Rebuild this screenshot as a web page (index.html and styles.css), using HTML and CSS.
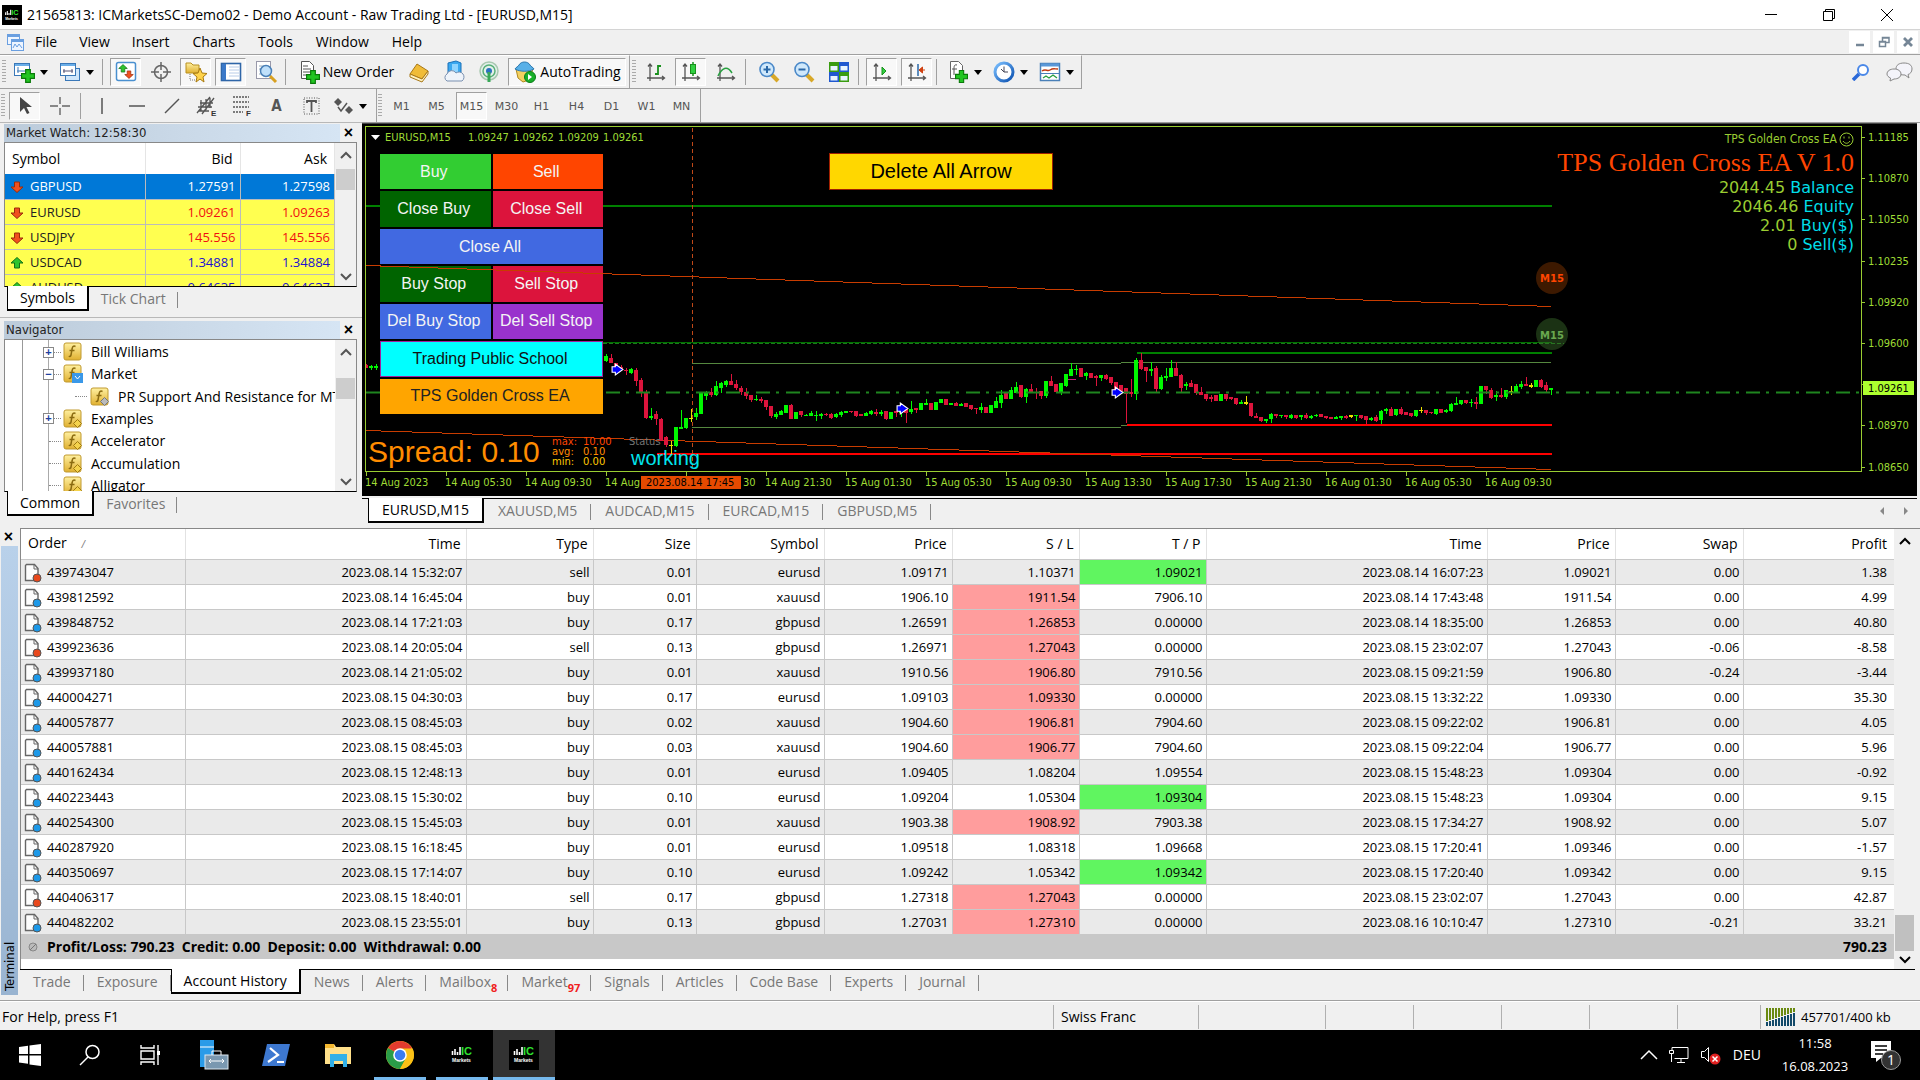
FILE: index.html
```html
<!DOCTYPE html>
<html lang="en">
<head>
<meta charset="utf-8">
<title>21565813: ICMarketsSC-Demo02 - Demo Account - Raw Trading Ltd - [EURUSD,M15]</title>
<link rel="stylesheet" href="styles.css">
</head>
<body>
<svg class="defs" aria-hidden="true">
  <defs>
    <linearGradient id="gold" x1="0" y1="0" x2="0" y2="1"><stop offset="0" stop-color="#fff0a0"/><stop offset="1" stop-color="#e0b030"/></linearGradient>
    <linearGradient id="blue" x1="0" y1="0" x2="1" y2="1"><stop offset="0" stop-color="#7cc0ff"/><stop offset="1" stop-color="#0a50b0"/></linearGradient>
    <symbol id="plus" viewBox="0 0 12 12"><path d="M4 0.500h4v3.500h3.500v4H8v3.500H4V8H0.500V4H4z" fill="#22c522" stroke="#0a7a0a"/></symbol>
    <symbol id="fx" viewBox="0 0 20 20"><rect x="1" y="1" width="17" height="17" rx="2" fill="url(#gold)" stroke="#c09a30"/><path d="M12.500 4.500c-2-1-3 0-3.300 2L8 13c-.3 1.500-1.200 1.800-2.200 1.200M6.500 8.500h5" fill="none" stroke="#8a6a10" stroke-width="1.500"/></symbol>
    <symbol id="fxd" viewBox="0 0 20 20"><use href="#fx"/><path d="M14.500 10.500l4 4-4 4-4-4z" fill="#f4d24c" stroke="#a07a10"/></symbol>
    <symbol id="axes" viewBox="0 0 20 20"><path d="M4 2v17M1 16h17M2 4.500l2-2.500 2 2.500M16 14l2.500 2-2.500 2" fill="none" stroke="#555" stroke-width="1.300"/></symbol>
    <symbol id="up" viewBox="0 0 14 12"><path d="M7 .5l6 5.500h-3.500v5h-5V6H1z" fill="#2ec42e" stroke="#157015"/></symbol>
    <symbol id="down" viewBox="0 0 14 12"><path d="M7 11.500L1 6h3.500V1h5v5H13z" fill="#f0501e" stroke="#9a2c0a"/></symbol>
    <symbol id="doc" viewBox="0 0 18 20"><path d="M2.500 1.500h8l3.500 4v12H1.500v-15z" fill="#fdfdfd" stroke="#666" stroke-width="1.400"/><path d="M10 1.500V6h4" fill="none" stroke="#666"/></symbol>
    <symbol id="ic" viewBox="0 0 30 30"><rect width="30" height="30"/><path d="M5.500 15v-4M8 15V9M10.500 15v-3M13 15V7" stroke="#fff" stroke-width="1.600"/><text x="14" y="15" font-family="Liberation Sans" font-size="11" font-weight="bold" fill="#2fe02f">IC</text><text x="5" y="22" font-family="Liberation Sans" font-size="5" font-weight="bold" fill="#fff">Markets</text></symbol>
    <symbol id="arrow" viewBox="0 0 12 12"><path d="M1 3.500h3V1l7 5-7 5V8.500H1z" fill="#0000ff" stroke="#fff" stroke-width="1"/></symbol>
  </defs>
</svg>

<header class="titlebar">
  <svg class="app-icon" width="20" height="20"><use href="#ic"/></svg>
  <h1>21565813: ICMarketsSC-Demo02 - Demo Account - Raw Trading Ltd - [EURUSD,M15]</h1>
  <div class="window-controls">
    <button aria-label="Minimize"><svg width="14" height="14"><path d="M1 6.500h12" stroke="#000"/></svg></button>
    <button aria-label="Restore"><svg width="14" height="14" fill="none" stroke="#000"><path d="M1.500 3.500h9v9h-9zM3.500 3.500v-2h9v9h-2"/></svg></button>
    <button aria-label="Close"><svg width="14" height="14" fill="none" stroke="#000"><path d="M1 1l12 12M13 1L1 13"/></svg></button>
  </div>
</header>

<nav class="menubar">
  <svg width="20" height="20" fill="#eef5ff" stroke="#6a9fe0"><rect x="2.500" y="2.500" width="12" height="10"/><rect x="6.500" y="7.500" width="12" height="11"/><path d="M3 4h11M7 9h11" stroke-width="2"/><path d="M8 16l2-4 2 3 2-3 3 4" fill="none"/></svg>
  <button>File</button><button>View</button><button>Insert</button><button>Charts</button><button>Tools</button><button>Window</button><button>Help</button>
  <div class="mdi-controls">
    <button aria-label="Minimize chart"><svg width="12" height="12"><path d="M2 9h8" stroke="#758696" stroke-width="2.500"/></svg></button>
    <button aria-label="Restore chart"><svg width="12" height="12" fill="none" stroke="#758696" stroke-width="1.500"><path d="M1.500 5.500h6v5h-6zM1 6h7M4.500 5V1.500h6.500v5H8M4 2h7"/></svg></button>
    <button aria-label="Close chart"><svg width="12" height="12"><path d="M2 2l8 8M10 2l-8 8" stroke="#758696" stroke-width="2.800"/></svg></button>
  </div>
</nav>

<div class="toolbar-row">
  <div class="toolbar boxed">
    <span class="grip"></span>
    <button class="split" aria-label="New chart"><svg width="22" height="22"><rect x="1.500" y="2.500" width="15" height="12" fill="#fff" stroke="#3a78b8"/><path d="M2 4h14" stroke="#6aaee8" stroke-width="2"/><path d="M5 6v6M4 10h8" stroke="#3a78b8"/><use href="#plus" x="8" y="8" width="14" height="14"/></svg></button>
    <button class="split" aria-label="Profiles"><svg width="22" height="22"><rect x="6.500" y="7.500" width="14" height="12" fill="#cfe6fb" stroke="#3a78b8"/><rect x="1.500" y="2.500" width="15" height="12" fill="#fff" stroke="#3a78b8"/><path d="M2 4h14" stroke="#6aaee8" stroke-width="2"/><path d="M4 10h10M5 8v4M13 8v4" stroke="#557"/></svg></button>
    <span class="sep"></span>
    <button class="tool pressed" aria-label="Market Watch"><svg width="22" height="22"><rect x="1.500" y="1.500" width="19" height="18" rx="2" fill="#fff" stroke="#4a90d0" stroke-width="1.500"/><use href="#up" x="3" y="3" width="10" height="9"/><use href="#down" x="9" y="9" width="10" height="9"/></svg></button>
    <button class="tool" aria-label="Data Window"><svg width="22" height="22" fill="none" stroke="#666" stroke-width="1.500"><circle cx="11" cy="11" r="6.500"/><path d="M11 1v8M11 13v8M1 11h8M13 11h8"/></svg></button>
    <button class="tool pressed" aria-label="Navigator"><svg width="24" height="24"><path d="M2 3h5l2 2h6v8H2z" fill="url(#gold)" stroke="#b89020"/><path d="M6 14v6h5" stroke="#777" stroke-dasharray="1 1" fill="none"/><path d="M16 8l2 5 5 .5-4 3.500 1 5-4-3-4 3 1-5-4-3.500 5-.5z" fill="#ffd34a" stroke="#a87a10"/></svg></button>
    <button class="tool pressed" aria-label="Terminal"><svg width="22" height="22"><rect x="1.500" y="2.500" width="19" height="17" fill="#fff" stroke="#2f66a8" stroke-width="1.600"/><path d="M4 3v16" stroke="#3a78c8" stroke-width="4"/><path d="M9 6h10M9 9h10M9 12h10M9 15h10" stroke="#b8cce8"/></svg></button>
    <button class="tool" aria-label="Strategy Tester"><svg width="24" height="24"><rect x="2.500" y="1.500" width="14" height="17" fill="#fff" stroke="#99a"/><path d="M5 6h8M5 9h8M5 14h8" stroke="#9ab"/><path d="M16 16l6 6" stroke="#d8a020" stroke-width="3"/><circle cx="12" cy="11" r="5.500" fill="#bfe0fb" stroke="#4a80b8" stroke-width="1.500"/></svg></button>
    <span class="sep"></span>
    <button class="text-tool order"><svg width="22" height="24"><path d="M3.500 1.500h8l4 4v13h-12z" fill="#fff" stroke="#555"/><path d="M5 6h5M5 9h8M5 12h8M5 15h5" stroke="#555"/><use href="#plus" x="8" y="10" width="14" height="14"/></svg><span>New Order</span></button>
    <button class="tool" aria-label="MetaEditor"><svg width="22" height="22"><path d="M2 13L9 3l11 7-6 8z" fill="#f0bc38" stroke="#a87818"/><path d="M2 13l12 5 6-8v3l-6 8-12-5z" fill="#fff2c0" stroke="#a87818"/></svg></button>
    <button class="tool" aria-label="Market"><svg width="22" height="24"><path d="M5 3l8-2 5 2v12H5z" fill="#3aa8f0" stroke="#1a70b8"/><path d="M9 4h6v8H9z" fill="#8fd4ff"/><path d="M4 21a4 4 0 010-7 5 5 0 019-1 4 4 0 016 8z" fill="#eef3fa" stroke="#7a90b0"/></svg></button>
    <button class="tool" aria-label="Signals"><svg width="22" height="22" fill="none"><circle cx="11" cy="10" r="9" fill="#e4f0ea" stroke="#a8c8b0" stroke-width="1.500"/><circle cx="11" cy="10" r="6" stroke="#58b078" stroke-width="1.500"/><circle cx="11" cy="10" r="3" fill="#2a70c0"/><path d="M11 11v10" stroke="#38a858" stroke-width="3"/></svg></button>
    <button class="text-tool auto pressed"><svg width="24" height="24"><path d="M3 9h17l-4 11-6 2-5-4z" fill="#f4d060" stroke="#b08a20"/><path d="M2 9c1-2 3-2 4-4 2-4 9-4 11 0 1 2 3 2 4 4-5 3-14 3-19 0z" fill="#58b0e8" stroke="#2a78b0"/><circle cx="17" cy="17" r="5.500" fill="#18b028" stroke="#0a7a18"/><path d="M15 14v6l4-3z" fill="#fff"/></svg><span>AutoTrading</span></button>
  </div>
  <div class="toolbar boxed">
    <span class="grip"></span>
    <button class="tool" aria-label="Bar Chart"><svg width="20" height="20"><use href="#axes"/><path d="M9 12h3V4h3" stroke="#18901c" stroke-width="1.800" fill="none"/></svg></button>
    <button class="tool pressed" aria-label="Candlesticks"><svg width="20" height="20"><use href="#axes"/><path d="M12 0v14" stroke="#18901c" stroke-width="1.500"/><rect x="9.500" y="2.500" width="5" height="9" fill="#30d040" stroke="#18901c"/></svg></button>
    <button class="tool" aria-label="Line Chart"><svg width="20" height="20"><use href="#axes"/><path d="M2 14c4-8 9-11 14-3" stroke="#28a040" stroke-width="1.500" fill="none"/></svg></button>
    <span class="sep"></span>
    <button class="tool" aria-label="Zoom In"><svg width="22" height="22"><path d="M13 13l7 7" stroke="#d8a828" stroke-width="4"/><circle cx="9" cy="8.500" r="7" fill="#cfe8fb" stroke="#4a88c8" stroke-width="1.600"/><path d="M9 5v7M5.500 8.500h7" stroke="#2a68a8" stroke-width="2"/></svg></button>
    <button class="tool" aria-label="Zoom Out"><svg width="22" height="22"><path d="M13 13l7 7" stroke="#d8a828" stroke-width="4"/><circle cx="9" cy="8.500" r="7" fill="#cfe8fb" stroke="#4a88c8" stroke-width="1.600"/><path d="M5.500 8.500h7" stroke="#2a68a8" stroke-width="2"/></svg></button>
    <button class="tool" aria-label="Tile Windows"><svg width="20" height="20"><path d="M0 0h10v10H0zM10 10h10v10H10z" fill="#3a9c10"/><path d="M10 0h10v10H10zM0 10h10v10H0z" fill="#2058d0"/><path d="M1.500 4h7v4.500h-7zM11.500 4h7v4.500h-7zM1.500 14h7v4.500h-7zM11.500 14h7v4.500h-7z" fill="#e8f4ff"/></svg></button>
    <span class="sep"></span>
    <button class="tool pressed" aria-label="Auto Scroll"><svg width="20" height="20"><use href="#axes"/><path d="M10 5v8l4-4z" fill="#30d040" stroke="#18901c"/></svg></button>
    <button class="tool pressed" aria-label="Chart Shift"><svg width="20" height="20"><use href="#axes"/><path d="M11 2v12" stroke="#2a68a8" stroke-width="1.500"/><path d="M18 8h-5M15.500 5L12 8l3.500 3z" stroke="#d04010" fill="#d04010"/></svg></button>
    <span class="sep"></span>
    <button class="split" aria-label="Indicators"><svg width="22" height="24"><path d="M3.500 1.500h8l4 4v13h-12z" fill="#fff" stroke="#666"/><path d="M10 5c-3-1-3 2-3 4v6M5 9h5" stroke="#555" fill="none"/><use href="#plus" x="8" y="10" width="13" height="13"/></svg></button>
    <button class="split" aria-label="Periods"><svg width="22" height="22"><circle cx="11" cy="11" r="9" fill="#fff" stroke="url(#blue)" stroke-width="3"/><path d="M11 5.500V11h4M11 11L8 8" stroke="#445" fill="none"/></svg></button>
    <button class="split" aria-label="Templates"><svg width="22" height="22"><rect x="1.500" y="2.500" width="19" height="17" fill="#fff" stroke="#4a80b8" stroke-width="1.500"/><path d="M2 4h18" stroke="#5a98d8" stroke-width="3"/><path d="M3 10c4-3 5 1 8-1s4-1 8-1" stroke="#c03a10" fill="none" stroke-width="1.400"/><path d="M1 12.500h20" stroke="#4a80b8"/><path d="M4 17l3-2 3 2 4-3 4 3" stroke="#28a040" fill="none" stroke-width="1.400"/></svg></button>
  </div>
  <div class="toolbar-right">
    <button class="tool" aria-label="Search"><svg width="18" height="18" fill="none"><path d="M7 11l-6 6" stroke="#2a68d8" stroke-width="3.500"/><circle cx="11" cy="7" r="5" fill="#fff" stroke="#4a88e8" stroke-width="2"/></svg></button>
    <button class="tool" aria-label="Community"><svg width="28" height="20" fill="#f4f4fa" stroke="#888"><path d="M18 1c5 0 8 2 8 6 0 3-2 5-4 5.500l1 3.500-4-3c-6 0-9-2-9-6s3-6 8-6z"/><path d="M8 7c4 0 7 2 7 5s-3 5-7 5l-4 2 .5-3C2.500 15 1 14 1 12c0-3 3-5 7-5z"/></svg></button>
  </div>
</div>

<div class="toolbar-row second">
  <div class="toolbar">
    <span class="grip"></span>
    <button class="tool pressed" aria-label="Cursor"><svg width="16" height="20"><path d="M3 1v15l4-4 3 6 2.500-1-3-6H15z" fill="#444"/></svg></button>
    <button class="tool" aria-label="Crosshair"><svg width="20" height="20" stroke="#666" stroke-width="1.400"><path d="M10 1v7M10 12v7M0 10h8M12 10h8"/></svg></button>
    <span class="sep tight"></span>
    <button class="tool" aria-label="Vertical Line"><svg width="16" height="18"><path d="M8 1v16" stroke="#555" stroke-width="1.500"/></svg></button>
    <button class="tool" aria-label="Horizontal Line"><svg width="16" height="16"><path d="M0 8h16" stroke="#555" stroke-width="1.500"/></svg></button>
    <button class="tool" aria-label="Trendline"><svg width="16" height="16"><path d="M1 15L15 1" stroke="#555" stroke-width="1.500"/></svg></button>
    <button class="tool" aria-label="Equidistant Channel"><svg width="22" height="22"><path d="M1 18L14 2M6 19L18 3M2 12h14M4 8h13M3 16h10M5 5l0 11M10 4v11M14 3v10" stroke="#555" stroke-width="1.300"/><text class="mini" x="15" y="21">E</text></svg></button>
    <button class="tool" aria-label="Fibonacci"><svg width="22" height="22"><path d="M2 2h16M2 7h16M2 12h16M2 17h10" stroke="#555" stroke-width="1.500" stroke-dasharray="2 1"/><text class="mini" x="15" y="21">F</text></svg></button>
    <button class="tool letter">A</button>
    <button class="tool" aria-label="Text Label"><svg width="20" height="20"><rect x="2" y="2" width="15" height="16" fill="none" stroke="#555" stroke-dasharray="1 1.500"/><path d="M5 7V5h9v2M9.500 5v11" stroke="#555" stroke-width="1.800" fill="none"/></svg></button>
    <button class="split" aria-label="Arrows"><svg width="20" height="18"><path d="M4 1l4 4-4 4-4-4zM15 9l4 4-4 4-4-4z" fill="#555"/><path d="M4 10l3 4 6-8" stroke="#555" stroke-width="1.500" fill="none"/></svg></button>
  </div>
  <div class="toolbar periods">
    <span class="grip"></span>
    <button class="tool">M1</button><button class="tool">M5</button><button class="tool pressed">M15</button><button class="tool">M30</button><button class="tool">H1</button><button class="tool">H4</button><button class="tool">D1</button><button class="tool">W1</button><button class="tool">MN</button>
  </div>
</div>

<main class="workspace">
  <aside class="dock">
    <section class="panel">
      <div class="caption"><h2>Market Watch: 12:58:30</h2><button aria-label="Close Market Watch">×</button></div>
      <div class="list watch">
        <table class="quotes">
          <colgroup><col class="q-symbol"><col class="q-price"><col class="q-price"></colgroup>
          <thead><tr><th>Symbol</th><th>Bid</th><th>Ask</th></tr></thead>
          <tbody>
            <tr class="selected"><td><svg width="14" height="12"><use href="#down"/></svg>GBPUSD</td><td>1.27591</td><td>1.27598</td></tr>
            <tr class="fall"><td><svg width="14" height="12"><use href="#down"/></svg>EURUSD</td><td>1.09261</td><td>1.09263</td></tr>
            <tr class="fall"><td><svg width="14" height="12"><use href="#down"/></svg>USDJPY</td><td>145.556</td><td>145.556</td></tr>
            <tr class="rise"><td><svg width="14" height="12"><use href="#up"/></svg>USDCAD</td><td>1.34881</td><td>1.34884</td></tr>
            <tr class="rise"><td><svg width="14" height="12"><use href="#up"/></svg>AUDUSD</td><td>0.64635</td><td>0.64637</td></tr>
          </tbody>
        </table>
        <div class="scroll"><svg width="12" height="8"><path d="M1 7l5-5 5 5"/></svg><i></i><svg width="12" height="8"><path d="M1 1l5 5 5-5"/></svg></div>
      </div>
      <div class="tabs"><button class="active">Symbols</button><button>Tick Chart</button></div>
    </section>
    <section class="panel">
      <div class="caption"><h2>Navigator</h2><button aria-label="Close Navigator">×</button></div>
      <div class="list nav">
        <ul class="tree">
          <li><b class="box">+</b><svg width="20" height="20"><use href="#fx"/></svg>Bill Williams</li>
          <li><b class="box">−</b><svg width="20" height="20"><use href="#fx"/><rect x="9" y="9" width="11" height="10" fill="#3a98e8"/><path d="M12 12l2.500 3 2.500-3" stroke="#fff" fill="none"/></svg>Market</li>
          <li class="deep"><svg width="20" height="20"><use href="#fx"/><path d="M14.500 10.500l4 4-4 4-4-4z" fill="#bbb" stroke="#777"/></svg>PR Support And Resistance for MT4</li>
          <li><b class="box">+</b><svg width="20" height="20"><use href="#fxd"/></svg>Examples</li>
          <li><svg width="20" height="20"><use href="#fxd"/></svg>Accelerator</li>
          <li><svg width="20" height="20"><use href="#fxd"/></svg>Accumulation</li>
          <li><svg width="20" height="20"><use href="#fxd"/></svg>Alligator</li>
        </ul>
        <div class="scroll far"><svg width="12" height="8"><path d="M1 7l5-5 5 5"/></svg><i></i><svg width="12" height="8"><path d="M1 1l5 5 5-5"/></svg></div>
      </div>
      <div class="tabs"><button class="active">Common</button><button>Favorites</button></div>
    </section>
  </aside>

  <section class="charts">
    <div class="chart">
      <div class="plot">
        <div class="quick">
          <button class="lime">Buy</button><button class="orangered">Sell</button>
          <button class="green">Close Buy</button><button class="crimson">Close Sell</button>
          <button class="royal wide">Close All</button>
          <button class="green">Buy Stop</button><button class="crimson">Sell Stop</button>
          <button class="royal">Del Buy Stop</button><button class="orchid">Del Sell Stop</button>
          <button class="cyan wide">Trading Public School</button>
          <button class="orange wide">TPS Golden Cross EA</button>
        </div>
        <button class="delete-arrows">Delete All Arrow</button>
        <svg class="canvas">
          <g transform="translate(0 -7)" shape-rendering="crispEdges">
            <path class="l-olive" d="M326 243.500H755M755 242.500H1185M326 307.500H755M755 305.500H1185"/>
            <path class="l-green" d="M0 86H14M237 86H1186M771 233H1186"/>
            <path class="l-dark" d="M237 222.500H1186"/>
            <path class="l-dots" d="M237 223.500H1198"/>
            <path class="l-red" d="M761 305H1186M291 334H1186"/>
            <path class="l-trend" d="M0 145.500L1185 186.500M0 310.500L1185 349.500"/>
            <path class="l-cursor" d="M326.500 8V350"/>
            <path class="l-pink" d="M701 259.500h9"/>
            <g id="candles"></g>
          </g>
          <path class="l-price" d="M0 265.500H14M240 265.500H3000"/>
          <use href="#arrow" x="245" y="236" width="13" height="13"/>
          <use href="#arrow" x="530" y="275" width="13" height="13"/>
          <use href="#arrow" x="745" y="259" width="13" height="13"/>
          <circle cx="1186" cy="151" r="16" fill="#3d1900"/><text class="badge" x="1186" y="155" fill="#ff4500">M15</text>
          <circle cx="1186" cy="207" r="16" fill="#3c6e2d" fill-opacity=".45"/><text class="badge" x="1186" y="212" fill="#6aa84f">M15</text>
          <path d="M5 8h9l-4.500 5z" fill="#fff"/>
          <text class="tick" y="14"><tspan x="19">EURUSD,M15</tspan> <tspan x="102">1.09247</tspan> <tspan x="147">1.09262</tspan> <tspan x="192">1.09209</tspan> <tspan x="237">1.09261</tspan></text>
          <text class="status" x="263" y="318">Status</text>
          <text class="working" x="265" y="338">working</text>
          <text class="spread" x="2" y="335">Spread: 0.10</text>
          <g class="limits"><text x="186" y="318" fill="#ff4500">max:</text><text x="217" y="318" fill="#ff4500">10.00</text><text x="186" y="328" fill="#ff8c00">avg:</text><text x="217" y="328" fill="#ff8c00">0.10</text><text x="186" y="338" fill="#ffc800">min:</text><text x="217" y="338" fill="#ffc800">0.00</text></g>
        </svg>
        <div class="stats">
          <p class="expert">TPS Golden Cross EA<svg width="15" height="15" fill="none" stroke="#9acd32"><circle cx="7.500" cy="7.500" r="6.500"/><path d="M5 4.500v2M10 4.500v2M4 9c2 3 5 3 7 0"/></svg></p>
          <p class="name">TPS Golden Cross EA V 1.0</p>
          <p>2044.45 <span>Balance</span></p>
          <p>2046.46 <span>Equity</span></p>
          <p>2.01 <span>Buy($)</span></p>
          <p>0 <span>Sell($)</span></p>
        </div>
      </div>
      <svg class="price-axis" id="prices"></svg>
      <svg class="time-axis" id="times"></svg>
    </div>
    <div class="tabs chart-tabs"><button class="active">EURUSD,M15</button><button>XAUUSD,M5</button><button>AUDCAD,M15</button><button>EURCAD,M15</button><button>GBPUSD,M5</button>
      <div class="tab-arrows"><svg width="30" height="10" fill="#888"><path d="M5 1v8L1 5zM25 1v8l4-4z"/></svg></div>
    </div>
  </section>
</main>

<section class="terminal">
  <div class="strip"><button aria-label="Close Terminal">×</button><h2>Terminal</h2></div>
  <div class="terminal-body">
    <div class="history-wrap">
      <table class="history">
        <colgroup><col class="c-order"><col class="c-time"><col class="c-low"><col class="c-size"><col class="c-mid"><col class="c-mid"><col class="c-low"><col class="c-low"><col class="c-time"><col class="c-mid"><col class="c-mid"><col></colgroup>
        <thead><tr><th>Order <i>/</i></th><th>Time</th><th>Type</th><th>Size</th><th>Symbol</th><th>Price</th><th>S / L</th><th>T / P</th><th>Time</th><th>Price</th><th>Swap</th><th>Profit</th></tr></thead>
        <tbody id="orders"></tbody>
        <tfoot><tr><td colspan="11"><svg width="12" height="12"><circle cx="6" cy="6" r="4" fill="#bbb" stroke="#888"/><path d="M3 9l6-6" stroke="#777"/></svg>Profit/Loss: 790.23&nbsp; Credit: 0.00&nbsp; Deposit: 0.00&nbsp; Withdrawal: 0.00</td><td>790.23</td></tr></tfoot>
      </table>
      <div class="scroll end"><svg width="12" height="8"><path d="M1 7l5-5 5 5"/></svg><i></i><svg width="12" height="8"><path d="M1 1l5 5 5-5"/></svg></div>
    </div>
    <div class="tabs"><button>Trade</button><button>Exposure</button><button class="active">Account History</button><button>News</button><button>Alerts</button><button class="counted">Mailbox<sub>8</sub></button><button class="counted">Market<sub>97</sub></button><button>Signals</button><button>Articles</button><button>Code Base</button><button>Experts</button><button>Journal</button></div>
  </div>
</section>

<footer class="statusbar">
  <span class="help">For Help, press F1</span><span class="w145">Swiss Franc</span><span class="w127"></span><span class="w88"></span><span class="w88"></span><span class="w88"></span><span class="w88"></span><span class="w83"></span>
  <span class="traffic"><svg width="30" height="18"><path d="M1 0v13M4 0v12M7 0v11M10 0v10M13 0v9M16 0v8M19 0v7M22 0v6M25 0v5M28 0v4" stroke="#6a8a10" stroke-width="2"/><path d="M1 18v-4M4 18v-5M7 18v-6M10 18v-7M13 18v-8M16 18v-9M19 18V8M22 18V7M25 18V6M28 18V5" stroke="#134a6a" stroke-width="2"/></svg>457701/400 kb</span>
</footer>

<div class="taskbar">
  <button class="sys" aria-label="Start"><svg width="22" height="22" fill="#fff"><path d="M0 3l9-1.300V10H0zM10.500 1.500L22 0v10H10.500zM0 11.500h9v8.300L0 18.500zM10.500 11.500H22V22l-11.500-1.500z"/></svg></button>
  <button class="sys" aria-label="Search"><svg width="22" height="22" fill="none" stroke="#fff" stroke-width="1.500"><circle cx="13.500" cy="8" r="6.500"/><path d="M9 13l-8 8"/></svg></button>
  <button class="sys" aria-label="Task View"><svg width="22" height="20" fill="none" stroke="#fff" stroke-width="1.400"><path d="M2 0v3h13V0M2 20v-3h13v3M2 6h13v8H2zM19 0v20"/><rect x="18" y="6" width="3" height="4" fill="#fff" stroke="none"/></svg></button>
  <button class="app" aria-label="Server Manager"><svg width="32" height="32"><path d="M2 1h14v27H2z" fill="#2a9be8"/><path d="M2 8h14" stroke="#fff"/><rect x="7" y="16" width="23" height="14" fill="#7a98b0" stroke="#dde8f0"/><path d="M14 16v-4h9v4M11 22h15M13 20l-2 2 2 2M24 20l2 2-2 2" stroke="#fff" fill="none"/></svg></button>
  <button class="app" aria-label="PowerShell"><svg width="30" height="26"><path d="M6 2h23l-5 22H1z" fill="#3d78d0"/><path d="M9 6l8 7-10 7M16 20h7" stroke="#fff" stroke-width="2.200" fill="none"/></svg></button>
  <button class="app" aria-label="File Explorer"><svg width="28" height="26"><path d="M1 2h9l2 3h15v17H1z" fill="#ffe08a"/><path d="M1 2h9v4H1z" fill="#f4b830"/><path d="M6 12h17v13h-4v-6h-9v6H6z" fill="#32b0e8"/></svg></button>
  <button class="app running" aria-label="Chrome"><svg width="30" height="30"><circle cx="15" cy="15" r="14" fill="#fbc116"/><path d="M15 15L2.900 8A14 14 0 0127.100 8z" fill="#e33b2e"/><path d="M2.900 8A14 14 0 0015 29l6-10.500L15 15z" fill="#2a9d48"/><path d="M15 8.500H27.300A14 14 0 0115 29l6-11z" fill="#fbc116"/><circle cx="15" cy="15" r="6.800" fill="#fff"/><circle cx="15" cy="15" r="5.300" fill="#3a7cf0"/></svg></button>
  <button class="app running" aria-label="IC Markets"><svg width="30" height="30"><use href="#ic"/></svg></button>
  <button class="app running current" aria-label="IC Markets MT4"><svg width="30" height="30"><use href="#ic"/></svg></button>
  <div class="tray">
    <svg width="18" height="12" fill="none" stroke="#fff" stroke-width="1.500"><path d="M1 10l8-8 8 8"/></svg>
    <svg width="20" height="18" fill="none" stroke="#fff"><path d="M3 4.500V1.500h16v11H5.500M8 16.500h8M12 13v3M.5 4.500h4v3h-4zM2.500 8v8"/></svg>
    <svg width="22" height="20" fill="none" stroke="#fff"><path d="M1.500 6.500h3l4-4v14l-4-4h-3z"/><circle cx="15" cy="14" r="5.500" fill="#e02020" stroke="none"/><path d="M12.500 11.500l5 5M17.500 11.500l-5 5" stroke-width="1.500"/></svg>
    <span>DEU</span>
    <time><span>11:58</span><span>16.08.2023</span></time>
    <svg width="34" height="34"><path d="M1 3h20v17H11l-5 4v-4H1z" fill="#fff"/><path d="M5 8h12M5 12h12M5 16h8" stroke="#000" stroke-width="1.500"/><circle cx="21" cy="22" r="9.500" fill="#333" stroke="#999"/><text x="17" y="27" font-family="Open Sans" font-size="14" fill="#fff">1</text></svg>
  </div>
</div>
<script src="app.js"></script>
</body>
</html>
```
FILE: styles.css
```css
* { box-sizing: border-box; }
body { margin: 0; min-height: 100vh; display: flex; flex-direction: column; background: #f0f0f0; color: #000; font: 13px/20px "Open Sans", "Noto Sans", sans-serif; overflow-x: hidden; }
button { border: 0; padding: 0; margin: 0; background: none; color: inherit; font: inherit; display: inline-flex; align-items: center; justify-content: center; white-space: nowrap; }
h1, h2, p, ul { margin: 0; padding: 0; font-weight: normal; }
svg { flex: none; display: block; }
.defs { position: absolute; width: 0; height: 0; }

.titlebar { height: 29px; background: #fff; display: flex; align-items: center; padding-left: 2px; }
.titlebar h1 { font-size: 14px; margin-left: 5px; flex: 1; white-space: nowrap; }
.window-controls { display: flex; padding-right: 4px; }
.window-controls button { width: 58px; height: 28px; }

.menubar { height: 26px; border-top: 1px solid #d4d4d4; border-bottom: 1px solid #a0a0a0; display: flex; align-items: center; padding-left: 5px; font-size: 14px; }
.menubar > button { padding: 0 11px; }
.menubar > button:nth-of-type(n+3) { padding-right: 12px; }
.menubar > svg { margin-right: -1px; }
.mdi-controls { display: flex; gap: 3px; margin-left: auto; padding-right: 2px; }
.mdi-controls button { width: 21px; height: 22px; background: #fff; }

.toolbar-row { height: 34px; display: flex; }
.toolbar-row.second { height: 33px; }
.toolbar { display: flex; align-items: center; gap: 4px; padding: 0 3px; border-right: 1px solid #a0a0a0; }
.toolbar.boxed { border-bottom: 1px solid #a0a0a0; border-top: 1px solid #fff; padding-left: 2px; }
.second .toolbar { padding: 1px 3px 0 1px; }
.grip { width: 4px; height: 24px; background: repeating-linear-gradient(#aaa 0 1px, #f0f0f0 1px 3px); }
.sep { width: 4px; height: 26px; border-left: 1px solid #a0a0a0; }
.sep.tight { width: 1px; margin: 0 1px; }
.tool { width: 31px; height: 28px; }
.pressed { background: #f8f8f8; border: 1px solid #fff; border-top-color: #a0a0a0; border-left-color: #a0a0a0; }
.split { width: 42px; height: 28px; justify-content: flex-start; gap: 5px; padding-left: 3px; }
.split::after { content: ""; border: 4px solid transparent; border-top: 5px solid #000; border-bottom: 0; }
.text-tool { height: 28px; font-size: 14px; gap: 3px; }
.order { width: 106px; }
.auto { width: 118px; }
.toolbar-right { display: flex; margin-left: auto; padding: 3px 5px 0 0; gap: 8px; }
.second .tool { color: #555; font-size: 12px; }
.second .letter { font: bold 15px "DejaVu Sans Condensed", sans-serif; }
.second .periods .tool { font: 11px "DejaVu Sans", sans-serif; }
.mini { font: bold 8px "Liberation Sans", sans-serif; fill: #333; }

.workspace { height: 406px; display: flex; background: #f0f0f0; }
.dock { width: 362px; flex: none; border-top: 1px solid #b8b8b8; }
.panel { height: 195px; padding: 1px 5px 0 4px; border-bottom: 1px solid #b8b8b8; }
.panel + .panel { padding-top: 3px; height: 210px; border-bottom: 0; }
.caption { height: 18px; display: flex; }
.caption h2 { flex: 1; padding-left: 2px; font: 13px/17px "DejaVu Sans Condensed", sans-serif; background: linear-gradient(90deg, #bccbda, #d6e5f4); color: #222; }
.caption button, .strip button { width: 17px; font: bold 16px/16px "Liberation Sans", sans-serif; }
.list { display: flex; background: #fff; border: 1px solid #888; border-bottom-color: #000; overflow: hidden; }
.watch { height: 145px; }
.nav { height: 153px; }
.quotes { flex: 1; table-layout: fixed; border-collapse: collapse; height: 155px; }
.q-symbol { width: 140px; }
.q-price { width: 94px; }
.quotes th { height: 31px; padding: 0 7px; font-size: 14px; font-weight: normal; text-align: right; border-right: 1px solid #e5e5e5; }
.quotes th:first-child { text-align: left; }
.quotes td { height: 25px; padding: 0 4px; text-align: right; border-right: 1px solid #bbb; border-bottom: 1px solid #bbb; line-height: 24px; }
.quotes td:first-child { text-align: left; padding-left: 5px; }
.quotes td svg { display: inline-block; margin-right: 6px; vertical-align: -2px; }
.quotes tbody tr { background: #ffff50; color: #222; }
.quotes .fall td + td { color: #f01010; }
.quotes .rise td + td { color: #2010d0; }
.quotes tbody .selected { background: #0078d7; color: #fff; }
.scroll { width: 21px; flex: none; background: #f0f0f0; display: flex; flex-direction: column; align-items: center; padding: 8px 0 5px; }
.scroll path { fill: none; stroke: #555; stroke-width: 2; }
.scroll i { width: 19px; height: 21px; margin: 10px 0 auto; background: #cdcdcd; }
.scroll.far i { margin-top: 22px; }
.scroll.end i { margin: auto 0 5px; height: 36px; background: #c0c0c0; }
.scroll.end path { stroke: #000; }

.tabs { display: flex; height: 26px; border-top: 1px solid #000; color: #777; font-size: 14px; }
.list + .tabs { border-top: 0; padding-left: 3px; }
.tabs button { padding: 0 12px; height: 24px; position: relative; }
.tabs button::after { content: ""; position: absolute; right: 0; top: 5px; height: 16px; border-right: 1px solid #888; }
.tabs .active { background: #fff; color: #000; border: 1px solid #000; border-top: 0; border-right-width: 2px; border-bottom-width: 2px; margin-top: -1px; height: 25px; }
.tabs .active::after { display: none; }
.tabs sub { color: #f02020; font: bold 11px/12px "Open Sans", sans-serif; align-self: flex-end; }

.tree { flex: 1; height: 157px; font-size: 14px; display: grid; grid-auto-rows: 1fr; list-style: none; padding: 1px 0 0; min-width: 0; overflow: hidden; background: linear-gradient(#999, #999) 17px 0 / 1px 100% no-repeat, linear-gradient(#aaa, #aaa) 43px 0 / 1px 100% no-repeat; }
.tree li { display: flex; align-items: center; padding-left: 58px; gap: 8px; white-space: nowrap; overflow: hidden; position: relative; }
.tree li::before { content: ""; position: absolute; left: 44px; width: 12px; border-top: 1px dotted #888; }
.tree .deep { padding-left: 85px; }
.tree .deep::before { left: 70px; }
.box { position: absolute; left: 38px; width: 11px; height: 11px; border: 1px solid #888; background: #fff; color: #2040a0; font: bold 11px/8px "Liberation Sans", sans-serif; text-align: center; z-index: 1; }

.charts { flex: 1; min-width: 0; display: flex; flex-direction: column; border-top: 1px solid #999; padding-right: 3px; }
.chart { height: 373px; background: #000; border-top: 1px solid #444; display: grid; grid-template: 346px 1fr / 1fr 55px; padding: 2px 0 0 3px; margin-bottom: 2px; }
.plot { position: relative; border: 1px solid #9acd32; overflow: hidden; }
.quick { position: absolute; left: 14px; top: 27px; width: 223px; height: 260px; display: grid; grid-template: repeat(7, 1fr) / 1fr 1fr; gap: 2px; font: 16px "Liberation Sans", sans-serif; color: #f4f4f4; }
.quick button { padding-right: 3px; }
.quick .wide { grid-column: span 2; }
.lime { background: #32cd32; } .orangered { background: #ff4500; } .green { background: #006400; } .crimson { background: #dc143c; }
.royal { background: #4169e1; } .orchid { background: #9932cc; }
.quick .cyan { background: #0ff; color: #111; border: 1px solid #a020a0; } .quick .orange { background: #ffa500; color: #222; }
.delete-arrows { position: absolute; left: 463px; top: 26px; width: 224px; height: 37px; background: #ffd700; border: 1px solid #a02000; font: 20px "Liberation Sans", sans-serif; }
.canvas { position: absolute; inset: 0; width: 100%; height: 100%; pointer-events: none; }
.canvas path[class] { fill: none; }
.l-olive { stroke: #55883f; } .l-green { stroke: #008000; stroke-width: 2; } .l-dark { stroke: #007000; }
.l-dots { stroke: #1c7a1c; stroke-dasharray: 4 2; } .l-red { stroke: #f00; stroke-width: 2; } .l-trend { stroke: #c83c00; }
.l-cursor { stroke: #c04818; stroke-dasharray: 4 3; } .l-pink { stroke: #d01880; }
.l-price { stroke: #1f851f; stroke-width: 2; stroke-dasharray: 14 6 3 7; }
.tick, .price-axis text, .time-axis text { font: 11px "DejaVu Sans Condensed", sans-serif; fill: #9fdc35; }
.badge { font: bold 10px "DejaVu Sans", sans-serif; text-anchor: middle; }
.status { font: 11px "DejaVu Sans Condensed", sans-serif; fill: #777; }
.working { font: 20px "Liberation Sans", sans-serif; fill: #00e5ee; }
.spread { font: 30px "Liberation Sans", sans-serif; fill: #ff8c00; }
.limits { font: 10px "DejaVu Sans", sans-serif; }
.stats { position: absolute; right: 7px; top: 4px; text-align: right; color: #9acd32; font: 16px/19px "DejaVu Sans", sans-serif; }
.stats span { color: #00dde8; }
.stats .expert { display: flex; justify-content: flex-end; align-items: center; gap: 2px; font: 12px/16px "DejaVu Sans Condensed", sans-serif; }
.stats .name { color: #ff4500; font: 26px/31px "Liberation Serif", serif; }
.price-axis { width: 55px; height: 100%; }
.time-axis { grid-column: span 2; width: 100%; height: 24px; }
.price-axis path, .time-axis path { stroke: #9acd32; }
.time-axis .mark, .price-axis .mark { fill: #000; }

.chart-tabs { padding-left: 6px; }
.chart-tabs button { padding: 0 13px; }
.chart-tabs button + button { padding: 0 14px; }
.tab-arrows { margin-left: auto; padding: 7px 8px 0 0; }

.terminal { flex: 1; display: flex; padding-bottom: 5px; border-bottom: 1px solid #a0a0a0; }
.strip { width: 18px; margin-right: 2px; display: flex; flex-direction: column; }
.strip button { height: 18px; }
.strip h2 { flex: 1; margin-left: 1px; background: linear-gradient(#99b4d1, #b9d1ea); writing-mode: vertical-rl; transform: rotate(180deg); font: 13px/17px "DejaVu Sans Condensed", sans-serif; padding-top: 4px; }
.terminal-body { flex: 1; min-width: 0; display: flex; flex-direction: column; border-top: 1px solid #888; padding-right: 5px; }
.history-wrap { flex: 1; display: flex; align-items: stretch; background: #fff; border-left: 1px solid #888; }
.history { flex: 1; align-self: flex-start; table-layout: fixed; border-collapse: collapse; width: 100%; }
.c-order { width: 164px; } .c-time { width: 281px; } .c-mid { width: 128px; } .c-low { width: 127px; } .c-size { width: 103px; }
.history th { height: 30px; padding: 0 5px; font-size: 14px; font-weight: normal; text-align: right; border-right: 1px solid #e2e2e2; border-bottom: 1px solid #c8c8c8; }
.history th:first-child, .history td:first-child { text-align: left; }
.history th:first-child { padding-left: 7px; }
.history th i { margin-left: 11px; font-size: 10px; color: #777; }
.history td { height: 25px; padding: 0 3px; text-align: right; border-right: 1px solid #c8c8c8; border-bottom: 1px solid #c8c8c8; line-height: 24px; background-clip: padding-box; }
.history td:last-child, .history th:last-child { border-right: 0; padding-right: 7px; }
.history td svg { display: inline-block; vertical-align: -6px; margin-right: 5px; }
.history tbody tr:nth-child(odd) { background: #eaeaea; }
.history .hit-sl { background-color: #ff9d9d; }
.history .hit-tp { background-color: #60f560; }
.history tfoot td { background: #c8c8c8; border: 0; font-size: 14px; font-weight: bold; }
.history tfoot svg { vertical-align: -1px; margin: 0 8px 0 3px; }
.terminal .tabs { height: 26px; }
.terminal .tabs button { padding: 0 13px; }
.terminal .tabs .active { padding: 0 12px; }
.terminal .tabs .counted { padding-right: 11px; }

.statusbar { height: 29px; display: flex; align-items: stretch; padding: 3px 0 1px 0; border-top: 1px solid #fff; font-size: 14px; }
.statusbar span { border-left: 1px solid #b0b0b0; padding-left: 7px; line-height: 24px; }
.statusbar .help { flex: 1; border: 0; padding-left: 2px; }
.w145 { width: 145px; } .w127 { width: 127px; } .w88 { width: 88px; } .w83 { width: 83px; }
.statusbar .traffic { width: 160px; display: flex; align-items: center; gap: 5px; padding-left: 5px; font-size: 13px; }

.taskbar { height: 50px; background: #000; color: #fff; display: flex; }
.sys { width: 60px; } .sys + .app { margin-left: 3px; }
.app { width: 62px; border: solid transparent; border-width: 3px 0; }
.running { width: 52px; margin: 0 5px; border-bottom-color: #76b9ed; }
.current { width: 62px; margin: 0; background: #333; border-top-color: #333; }
.tray { margin-left: auto; display: flex; align-items: center; gap: 11px; padding-right: 16px; font-size: 14px; }
.tray time { width: 98px; margin: 0 -5px 0 -6px; display: flex; flex-direction: column; align-items: center; font-size: 13px; line-height: 23px; }
```
FILE: app.js
```js
const SVG = "http://www.w3.org/2000/svg";
function add(parent, name, attrs, text) {
  const el = document.createElementNS(SVG, name);
  for (const key in attrs) el.setAttribute(key, attrs[key]);
  if (text) el.textContent = text;
  parent.append(el);
}

// Each bar: colour, high, body top, body bottom, low. Bars are 5px apart.
const colours = { g: "#00f800", r: "#dc143c", y: "#e8e000" };
const early = "r244 245 248 248|g245 246 248 250|g244 246 248 250";
const bars = "g234 236 241 242|r234 238 243 243|r243 243 247 248|r245 247 250 251|r248 250 251 255|g248 249 253 254|r248 250 261 266|r258 260 273 277|r270 272 298 299|g288 296 298 300|r291 294 299 305|r298 299 321 321|r316 317 325 327|y321 325 326 334|g307 307 326 327|g290 307 309 309|g298 298 308 309|y289 298 299 302|g288 293 297 300|g272 273 294 294|g271 272 276 280|r268 272 275 277|g261 266 275 276|g262 263 268 273|g260 261 265 267|r254 261 265 265|r260 264 268 270|r266 268 272 275|r268 272 276 279|r275 275 280 282|g275 279 280 281|r277 279 281 283|r280 280 287 290|r286 286 296 298|g292 294 297 299|g290 291 295 295|g285 285 293 293|r284 285 299 299|g292 292 299 299|r291 291 295 297|g294 295 296 296|g291 293 296 296|g291 295 296 301|g293 294 296 299|r293 294 295 296|r293 294 298 299|g293 294 297 298|g291 292 295 297|g291 291 293 293|r291 291 292 293|r291 291 296 297|r294 294 296 296|g292 293 296 296|g290 291 294 295|r289 292 294 296|g290 292 294 296|r291 291 299 300|g292 292 299 299|r291 291 293 297|g287 290 293 297|r288 289 293 303|g281 289 292 294|r288 288 290 293|g283 283 290 290|g279 283 285 285|r283 283 290 290|g282 282 290 290|g279 279 283 283|r279 279 285 285|g283 283 285 285|r282 283 286 286|g283 284 286 286|r283 283 287 287|r285 285 289 290|r288 288 289 294|g283 287 290 293|r287 287 293 293|g285 285 293 293|g277 281 288 288|g270 275 283 288|r273 273 279 279|g267 270 279 279|g262 267 273 273|r265 265 277 278|g268 269 277 283|r264 269 272 272|r268 272 273 279|r271 271 276 279|g261 261 276 278|r256 261 266 266|r264 264 272 272|g263 263 273 275|g254 254 266 267|g243 249 256 256|g245 249 250 255|r248 248 257 257|g252 253 256 260|r253 253 258 258|r255 256 258 266|g255 255 258 261|r254 255 259 260|r257 257 263 265|r262 262 270 270|r265 265 272 272|r268 268 274 303|r259 272 274 277|g238 240 274 280|r233 240 249 250|r247 247 251 262|g242 249 251 256|r246 248 269 272|g255 257 269 270|g248 256 258 261|g240 248 257 257|r242 248 256 256|r254 255 268 272|g262 264 266 270|r260 263 267 267|r264 264 273 275|r267 272 275 275|r274 274 279 281|r275 277 279 282|r275 275 281 281|g274 274 281 281|r274 274 279 281|r277 277 279 280|r278 278 284 285|g280 282 284 284|y276 282 284 285|r283 283 296 297|r293 296 298 298|r297 297 301 302|g299 299 301 303|g293 294 299 303|r294 294 296 298|g295 295 296 298|r295 295 297 299|g294 295 298 299|r295 295 298 299|g295 295 297 300|r293 295 298 299|g295 296 298 299|g294 295 296 297|r294 294 297 297|r296 296 298 299|r297 297 299 299|g296 297 299 299|g296 296 298 300|r295 296 298 299|y295 295 297 298|g295 295 296 301|r295 295 298 299|r296 296 300 304|g297 298 300 301|r295 297 301 302|g290 291 300 304|g288 289 291 294|r287 289 296 296|g289 289 295 296|r287 289 294 295|r292 292 295 295|r293 293 296 297|g290 290 296 297|y287 290 291 293|r290 290 293 295|r292 292 293 294|g289 289 294 295|r289 289 293 293|g289 290 292 293|g283 284 291 292|g277 283 285 285|g280 280 284 285|r280 280 283 284|g279 282 283 287|r277 282 284 289|g266 266 284 284|r266 266 270 274|r268 270 278 279|g271 275 277 281|r268 275 277 278|g270 270 277 279|y266 271 273 275|g264 266 273 273|g261 264 267 269|r257 264 266 266|y263 265 267 268|g260 260 267 267|r259 260 267 268|r262 265 270 273|g268 268 270 275";

const layer = document.getElementById("candles");
function drawBars(data, first) {
  data.split("|").forEach((bar, i) => {
    const fill = colours[bar[0]];
    const [high, top, bottom, low] = bar.slice(1).split(" ").map(Number);
    const x = (first + i) * 5;
    add(layer, "rect", { x, y: high, width: 1, height: low - high, fill });
    add(layer, "rect", { x: x - 2, y: top, width: 4, height: Math.max(bottom - top, 1), fill });
  });
}
drawBars(early, 0);
drawBars(bars, 48);

const prices = document.getElementById("prices");
["1.11185", "1.10870", "1.10550", "1.10235", "1.09920", "1.09600", "", "1.08970", "1.08650"].forEach((label, i) => {
  const y = Math.round(10 + i * 41.2);
  add(prices, "path", { d: `M0 ${y + 1}.5h3` });
  if (label) add(prices, "text", { x: 6, y: y + 5 }, label);
});
add(prices, "rect", { x: 1, y: 255, width: 51, height: 14, fill: "#adff2f" });
add(prices, "text", { x: 6, y: 266, class: "mark" }, "1.09261");

// The cursor date covers the end of the fourth label and the start of the fifth.
const times = document.getElementById("times");
["14 Aug 2023", "14 Aug 05:30", "14 Aug 09:30", "14 Aug", "", "14 Aug 21:30", "15 Aug 01:30", "15 Aug 05:30", "15 Aug 09:30", "15 Aug 13:30", "15 Aug 17:30", "15 Aug 21:30", "16 Aug 01:30", "16 Aug 05:30", "16 Aug 09:30"].forEach((label, i) => {
  add(times, "path", { d: `M${i * 80 + 1}.5 0v4` });
  if (label) add(times, "text", { x: i * 80, y: 14 }, label);
});
add(times, "text", { x: 378, y: 14 }, "30");
add(times, "rect", { x: 276, y: 4, width: 100, height: 13, fill: "#e64a00" });
add(times, "text", { x: 281, y: 14, class: "mark" }, "2023.08.14 17:45");

// order, open time, type, size, symbol, price, S/L, T/P, close time, close price, swap, profit, which stop was hit
const orders = `439743047|2023.08.14 15:32:07|sell|0.01|eurusd|1.09171|1.10371|1.09021|2023.08.14 16:07:23|1.09021|0.00|1.38|tp
439812592|2023.08.14 16:45:04|buy|0.01|xauusd|1906.10|1911.54|7906.10|2023.08.14 17:43:48|1911.54|0.00|4.99|sl
439848752|2023.08.14 17:21:03|buy|0.17|gbpusd|1.26591|1.26853|0.00000|2023.08.14 18:35:00|1.26853|0.00|40.80|sl
439923636|2023.08.14 20:05:04|sell|0.13|gbpusd|1.26971|1.27043|0.00000|2023.08.15 23:02:07|1.27043|-0.06|-8.58|sl
439937180|2023.08.14 21:05:02|buy|0.01|xauusd|1910.56|1906.80|7910.56|2023.08.15 09:21:59|1906.80|-0.24|-3.44|sl
440004271|2023.08.15 04:30:03|buy|0.17|eurusd|1.09103|1.09330|0.00000|2023.08.15 13:32:22|1.09330|0.00|35.30|sl
440057877|2023.08.15 08:45:03|buy|0.02|xauusd|1904.60|1906.81|7904.60|2023.08.15 09:22:02|1906.81|0.00|4.05|sl
440057881|2023.08.15 08:45:03|buy|0.03|xauusd|1904.60|1906.77|7904.60|2023.08.15 09:22:04|1906.77|0.00|5.96|sl
440162434|2023.08.15 12:48:13|buy|0.01|eurusd|1.09405|1.08204|1.09554|2023.08.15 15:48:23|1.09304|0.00|-0.92|
440223443|2023.08.15 15:30:02|buy|0.10|eurusd|1.09204|1.05304|1.09304|2023.08.15 15:48:23|1.09304|0.00|9.15|tp
440254300|2023.08.15 15:45:03|buy|0.01|xauusd|1903.38|1908.92|7903.38|2023.08.15 17:34:27|1908.92|0.00|5.07|sl
440287920|2023.08.15 16:18:45|buy|0.01|eurusd|1.09518|1.08318|1.09668|2023.08.15 17:20:41|1.09346|0.00|-1.57|
440350697|2023.08.15 17:14:07|buy|0.10|eurusd|1.09242|1.05342|1.09342|2023.08.15 17:20:40|1.09342|0.00|9.15|tp
440406317|2023.08.15 18:40:01|sell|0.17|gbpusd|1.27318|1.27043|0.00000|2023.08.15 23:02:07|1.27043|0.00|42.87|sl
440482202|2023.08.15 23:55:01|buy|0.13|gbpusd|1.27031|1.27310|0.00000|2023.08.16 10:10:47|1.27310|-0.21|33.21|sl`;
document.getElementById("orders").innerHTML = orders.split("\n").map((line) => {
  const cells = line.split("|");
  const hit = cells.pop();
  const dot = cells[2] === "sell" ? "#e8481c" : "#1c98e8";
  return "<tr>" + cells.map((cell, i) => {
    const mark = (hit === "sl" && i === 6) || (hit === "tp" && i === 7) ? ` class="hit-${hit}"` : "";
    const icon = i ? "" : `<svg width="18" height="20"><use href="#doc"/><circle cx="13" cy="15" r="4" fill="${dot}" stroke="#555"/></svg>`;
    return `<td${mark}>${icon}${cell}</td>`;
  }).join("") + "</tr>";
}).join("");
```
